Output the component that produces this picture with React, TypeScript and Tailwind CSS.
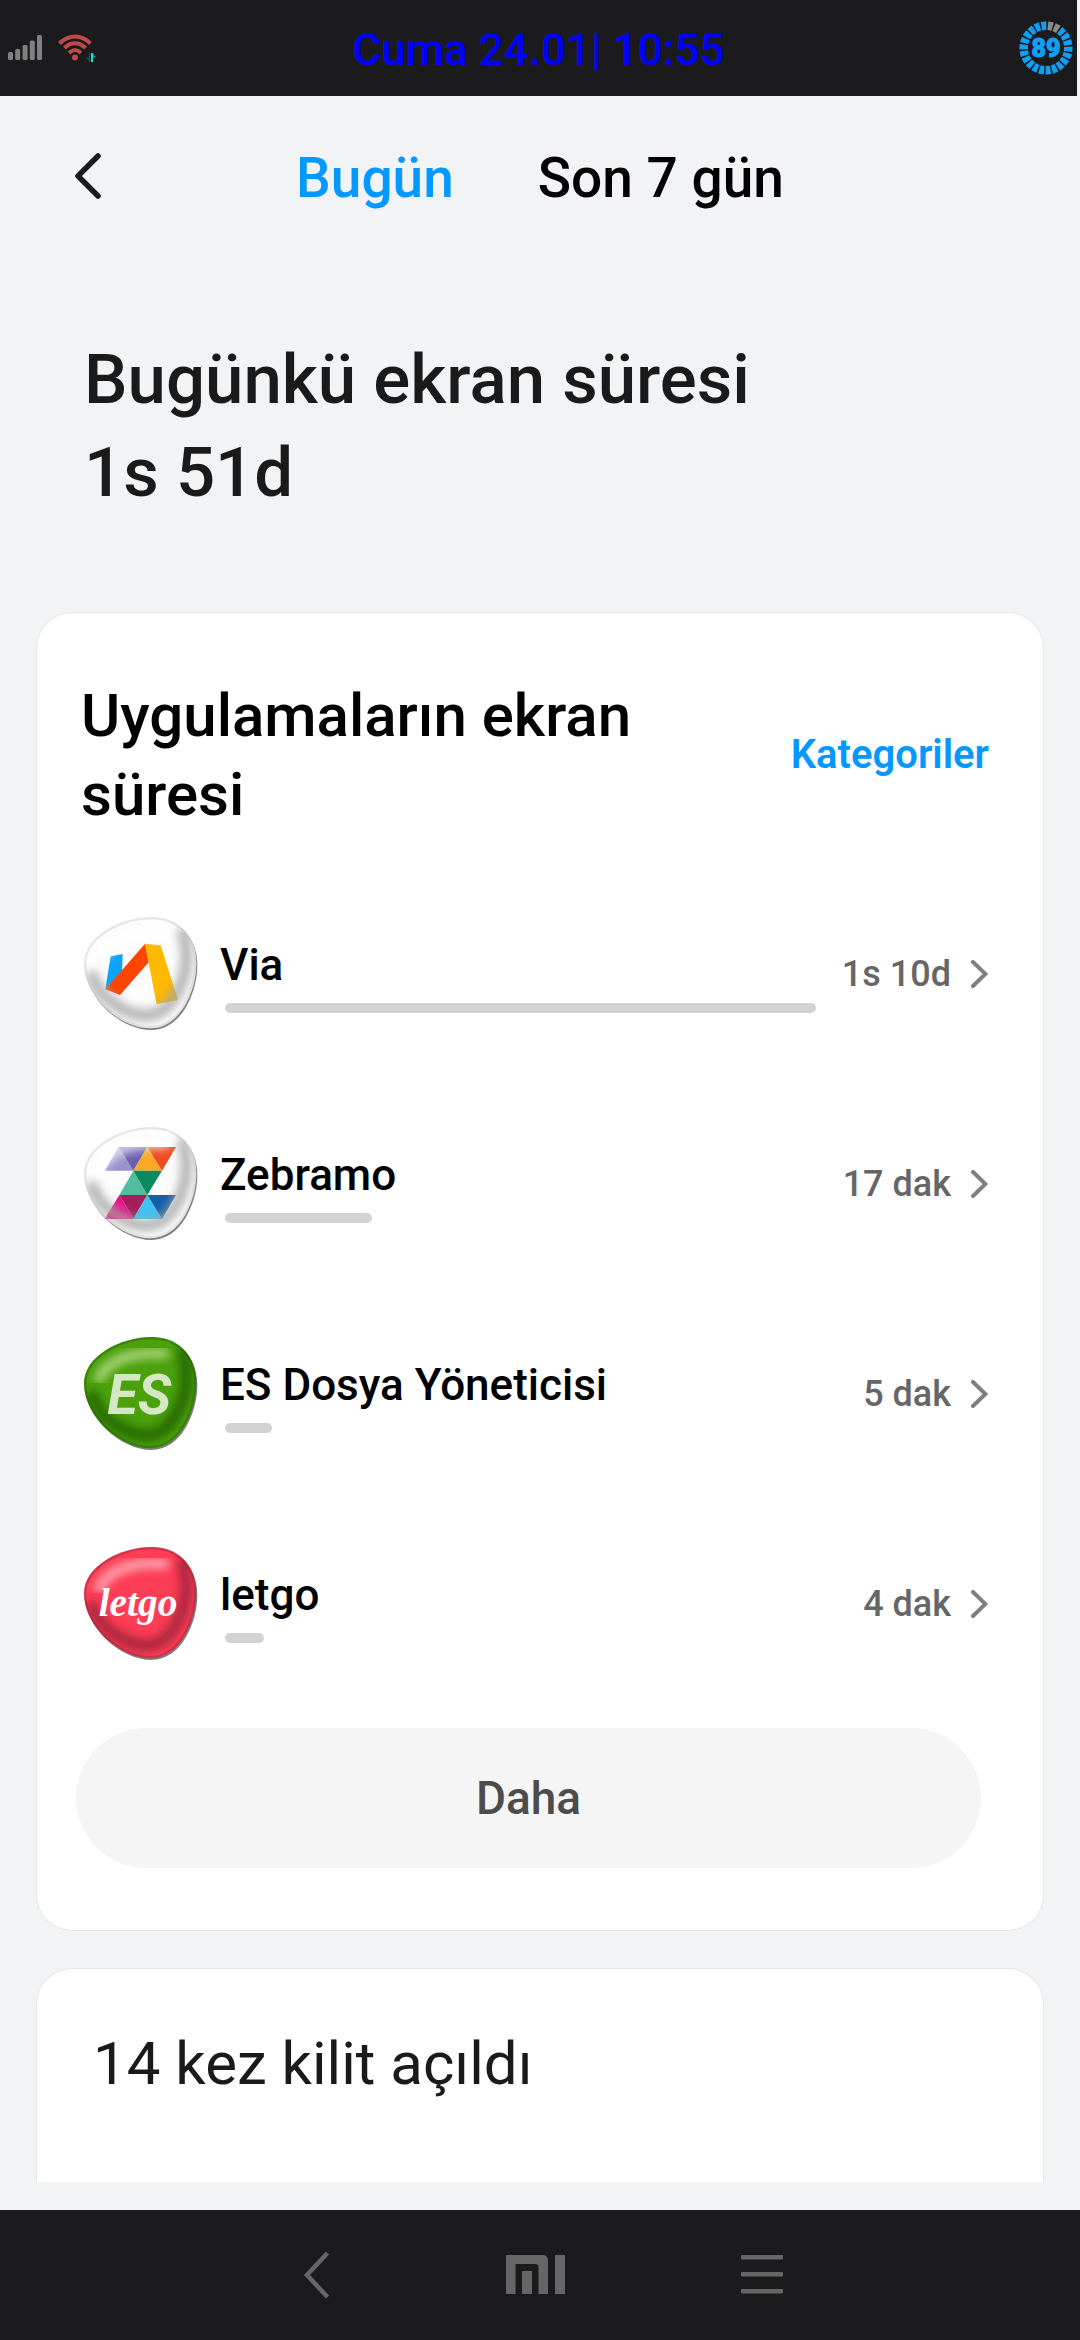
import React, { useState } from "react";
import clsx from "clsx";

const BLOB =
  "M204 0C271 0 336 44 337 139C337 221 289 334 199 334C109 334 0 240 0 139C0 57 109 0 204 0Z";

type PebbleProps = {
  id: string;
  base: string;
  shade: string;
  glow: string;
  light?: boolean;
  children: React.ReactNode;
};

// Glossy pebble that every launcher icon sits on
function Pebble({ id, base, shade, glow, light, children }: PebbleProps) {
  return (
    <svg viewBox="0 0 342 342" className="w-[114px] h-[114px] shrink-0" aria-hidden="true">
      <defs>
        <clipPath id={`${id}-clip`}>
          <path d={BLOB} />
        </clipPath>
        <filter id={`${id}-soft`} x="-20%" y="-20%" width="140%" height="140%">
          <feGaussianBlur stdDeviation="12" />
        </filter>
        <filter id={`${id}-drop`} x="-10%" y="-10%" width="120%" height="120%">
          <feGaussianBlur stdDeviation="2" />
        </filter>
      </defs>
      <path d={BLOB} fill="#000" opacity="0.5" transform="translate(3 5)" filter={`url(#${id}-drop)`} />
      <path d={BLOB} fill={base} />
      {light && children}
      <g clipPath={`url(#${id}-clip)`}>
        <path
          d="M298 50C320 130 302 206 256 262C214 312 150 300 92 262C60 240 38 216 26 180"
          fill="none"
          stroke={shade}
          strokeWidth="38"
          strokeLinecap="round"
          opacity="0.75"
          filter={`url(#${id}-soft)`}
        />
        <path
          d="M46 122C76 66 150 44 240 50"
          fill="none"
          stroke={glow}
          strokeWidth="34"
          strokeLinecap="round"
          opacity="0.7"
          filter={`url(#${id}-soft)`}
        />
        <path
          d={BLOB}
          fill="none"
          stroke={light ? "#c4c4c4" : shade}
          strokeWidth="14"
          opacity="0.4"
          filter={`url(#${id}-drop)`}
        />
      </g>
      {!light && children}
    </svg>
  );
}

function ViaIcon() {
  return (
    <Pebble id="via" base="#fdfdfd" shade="#a3a3a3" glow="#ffffff" light>
      <path d="M80 118L116 111L114 168L64 216Z" fill="#0aa5fb" />
      <path d="M183 80L194 136L108 234L64 217Z" fill="#ff4500" />
      <path d="M183 80L230 85L282 249L218 262Z" fill="#ffb900" />
    </Pebble>
  );
}

function ZebramoIcon() {
  return (
    <Pebble id="zebramo" base="#fdfdfd" shade="#a3a3a3" glow="#ffffff" light>
      <path d="M62 131L104 60L148 131Z" fill="#9a92cd" />
      <path d="M104 60H190L148 131Z" fill="#6a60ad" />
      <path d="M190 60L234 131H148Z" fill="#faa924" />
      <path d="M190 60H276L234 131Z" fill="#f04b23" />
      <path d="M148 131L190 204H106Z" fill="#51bd9c" />
      <path d="M148 131H234L190 204Z" fill="#0b8a60" />
      <path d="M106 204L148 276H62Z" fill="#ea118a" />
      <path d="M106 204H190L148 276Z" fill="#a81e5c" />
      <path d="M190 204L234 276H148Z" fill="#3ec3f4" />
      <path d="M190 204H276L234 276Z" fill="#1260a8" />
    </Pebble>
  );
}

function EsIcon() {
  return (
    <Pebble id="es" base="#4ba00b" shade="#1d5c00" glow="#c4e39b">
      <text
        x="70"
        y="231"
        className="font-['Roboto'] font-bold italic"
        fontSize="168"
        fill="#d5e8c6"
      >
        ES
      </text>
    </Pebble>
  );
}

function LetgoIcon() {
  return (
    <Pebble id="letgo" base="#fd3d55" shade="#96233a" glow="#ffc2ca">
      <text
        x="44"
        y="208"
        className="font-['Liberation_Serif'] font-bold italic"
        fontSize="118"
        fill="#fff"
      >
        letgo
      </text>
    </Pebble>
  );
}

const APPS = [
  { name: "Via", time: "1s 10d", bar: 100, icon: ViaIcon },
  { name: "Zebramo", time: "17 dak", bar: 24.8, icon: ZebramoIcon },
  { name: "ES Dosya Yöneticisi", time: "5 dak", bar: 8, icon: EsIcon },
  { name: "letgo", time: "4 dak", bar: 6.6, icon: LetgoIcon },
];

const TABS = ["Bugün", "Son 7 gün"];

function BatteryRing() {
  return (
    <svg viewBox="0 0 54 54" className="w-[54px] h-[54px]" aria-hidden="true">
      {Array.from({ length: 22 }, (_, i) => (
        <path
          key={i}
          d="M24.200 0.500H29.800L29 9H25Z"
          fill={i < 2 ? "#8a8a8a" : "#0f9ff5"}
          transform={`rotate(${i * 16.36 + 11} 27 27)`}
        />
      ))}
      <text
        x="27"
        y="36"
        textAnchor="middle"
        fontSize="25"
        className="font-['Roboto'] font-black"
        fill="#0f9ff5"
        stroke="#0f9ff5"
        strokeWidth="1"
      >
        89
      </text>
    </svg>
  );
}

function StatusBar() {
  return (
    <div className="h-24 mr-[3px] bg-[#1b1b1d] grid grid-cols-[1fr_auto_1fr] items-center">
      <div className="flex items-center gap-x-4 ml-2">
        <svg viewBox="0 0 34 26" className="w-[34px] h-[26px]" fill="#808080" aria-hidden="true">
          <rect x="0" y="17" width="5" height="8" rx="1.5" />
          <rect x="7.2" y="14" width="5" height="11" rx="1.5" />
          <rect x="14.6" y="10" width="5" height="15" rx="1.5" />
          <rect x="21.8" y="5.5" width="5" height="19.5" rx="1.5" />
          <rect x="29" y="0" width="5" height="25" rx="1.5" />
        </svg>
        <svg viewBox="0 0 40 30" className="w-10 h-[30px]" fill="none" aria-hidden="true">
          <g stroke="#bd4a4a" strokeWidth="4">
            <path d="M1.500 10.500C10.500 1 23.500 1 32.500 10.500" />
            <path d="M6.500 15C13 8.500 21 8.500 27.500 15" />
            <path d="M11 20C15 16 19 16 23 20" />
          </g>
          <circle cx="17" cy="24.500" r="3" fill="#bd4a4a" />
          <path d="M31.500 20V29M31 27L28.500 24.500" stroke="#1c4a4c" strokeWidth="1.500" />
          <path d="M34 20V29" stroke="#15e0d8" strokeWidth="2" />
          <path d="M35 21L38 24.500H35Z" fill="#12a5a2" />
        </svg>
      </div>
      <p className="pt-1 text-[44px] leading-[52px] font-medium text-[#0000ff]">
        Cuma 24.01| 10:55
      </p>
      <div className="flex justify-end mr-1">
        <BatteryRing />
      </div>
    </div>
  );
}

function NavBar() {
  return (
    <nav className="h-[130px] bg-[#1b1b1d] flex items-center justify-center gap-x-[175px] pl-1">
      <button aria-label="Geri">
        <svg viewBox="0 0 30 48" className="w-[30px] h-12" fill="none" aria-hidden="true">
          <path d="M26.500 2L6 24L26.500 46" stroke="#666" strokeWidth="4.500" />
        </svg>
      </button>
      <button aria-label="Ana ekran">
        <svg viewBox="0 0 60 40" className="w-[60px] h-10" fill="#666" aria-hidden="true">
          <path d="M0 0H38Q42 1 42 6V39H32.500V12Q32.500 9 29 9H9.500V39H0Z" />
          <rect x="16" y="16" width="10" height="23" />
          <rect x="49" y="0" width="10" height="39" />
        </svg>
      </button>
      <button aria-label="Son uygulamalar">
        <svg viewBox="0 0 42 40" className="w-[42px] h-10" fill="#666" aria-hidden="true">
          <rect x="0" y="0" width="42" height="4.5" rx="1" />
          <rect x="0" y="17" width="42" height="4.5" rx="1" />
          <rect x="0" y="34" width="42" height="4.5" rx="1" />
        </svg>
      </button>
    </nav>
  );
}

function App() {
  const [tab, setTab] = useState(TABS[0]);

  return (
    <div className="min-h-screen flex flex-col bg-[#f1f3f5] font-['Roboto',sans-serif]">
      <StatusBar />

      <header className="h-40 px-[74px] grid grid-cols-[1fr_auto_1fr] items-center">
        <button aria-label="Geri dön" className="justify-self-start">
          <svg viewBox="0 0 28 48" className="w-7 h-12" fill="none" aria-hidden="true">
            <path
              d="M24 4L4 24L24 44"
              stroke="#1a1a1a"
              strokeWidth="5.500"
              strokeLinecap="round"
              strokeLinejoin="round"
            />
          </svg>
        </button>
        <div className="flex gap-x-[84px] pt-1">
          {TABS.map((item) => (
            <button
              key={item}
              onClick={() => setTab(item)}
              className={clsx(
                "text-[55px] leading-[64px] font-medium",
                tab === item ? "text-[#0599ff]" : "text-black"
              )}
            >
              {item}
            </button>
          ))}
        </div>
      </header>

      <main className="flex-1 px-9 pb-7">
        <h1 className="px-12 pt-[77px] pb-[93px] text-[69px] leading-[93px] font-medium text-[#1a1a1a]">
          Bugünkü ekran süresi
          <br />
          1s 51d
        </h1>

        <section className="bg-white border border-[#e5e6e8] rounded-[36px] pt-[63px] pb-[62px]">
          <div className="flex items-center justify-between gap-x-8 pl-11 pr-[54px]">
            <h2 className="text-[60px] leading-[79px] font-medium text-black">
              Uygulamaların ekran süresi
            </h2>
            <a href="#kategoriler" className="shrink-0 text-[40px] leading-[48px] font-semibold text-[#0599ff]">
              Kategoriler
            </a>
          </div>

          <ul className="mt-[35px]">
            {APPS.map((app) => (
              <li key={app.name}>
                <button className="w-full h-[210px] flex items-center pl-[47px] pr-[55px] text-left">
                  <app.icon />
                  <div className="flex-1 ml-[22px]">
                    <p className="text-[44px] leading-[60px] font-medium text-black">
                      {app.name}
                    </p>
                    <div className="mt-2 ml-[5px]">
                      <div
                        className="h-[10px] rounded-full bg-[#d3d3d3]"
                        style={{ width: `${app.bar}%` }}
                      />
                    </div>
                  </div>
                  <div className="w-[172px] flex items-center justify-end gap-x-5">
                    <span className="text-[36px] leading-[44px] font-medium text-[#666]">
                      {app.time}
                    </span>
                    <svg viewBox="0 0 17 28" className="w-[17px] h-7" fill="none" aria-hidden="true">
                      <path
                        d="M2 2L14.500 14L2 26"
                        stroke="#808080"
                        strokeWidth="4"
                        strokeLinecap="round"
                      />
                    </svg>
                  </div>
                </button>
              </li>
            ))}
          </ul>

          <div className="mt-[19px] pl-[39px] pr-[62px]">
            <button className="w-full h-[140px] rounded-full bg-[#f5f5f5] text-[46px] leading-[54px] font-medium text-[#4c4c4c]">
              Daha
            </button>
          </div>
        </section>

        <section className="mt-[37px] bg-white border border-b-0 border-[#e5e6e8] rounded-t-[36px] px-[56px] pt-[60px] pb-[83px]">
          <h2 className="text-[60px] leading-[70px] text-[#1a1a1a]">14 kez kilit açıldı</h2>
        </section>
      </main>

      <NavBar />
    </div>
  );
}

export default App;
